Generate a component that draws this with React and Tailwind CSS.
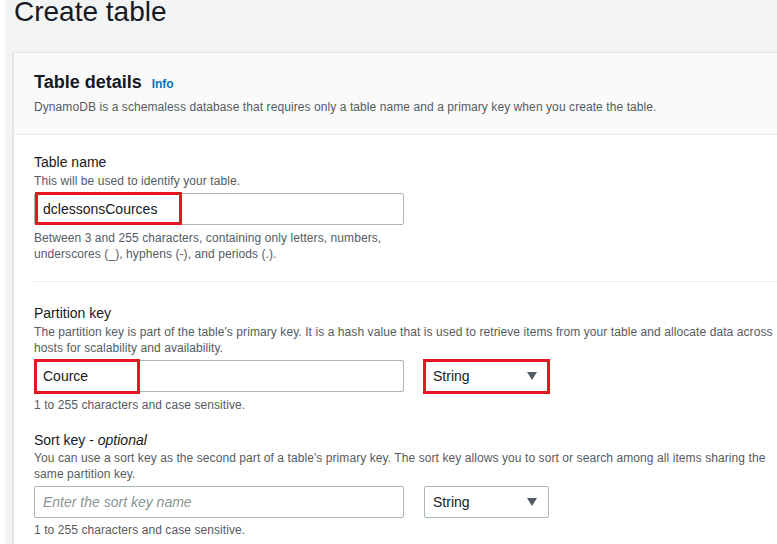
import React from "react";

const font = { fontFamily: '"Liberation Sans", Arial, sans-serif' };

const Caret = () => (
    <svg width="10" height="8" viewBox="0 0 10 8" className="shrink-0">
        <path d="M0 0 L10 0 L5 8 Z" fill="#545b64" />
    </svg>
);

const TypeSelect = ({ marked }) => (
    <div className="relative ml-5 w-[125px] h-8">
        <div className="flex items-center justify-between h-full px-2 border border-[#aab7b8] rounded-[2px] bg-white text-sm text-[#16191f]">
            <span>String</span>
            <span className="mr-[3px]">
                <Caret />
            </span>
        </div>
        {marked && (
            <div className="absolute -left-[1px] -top-[1px] w-[127px] h-[35px] border-[3px] border-[#e5161f]" />
        )}
    </div>
);

const TextBox = ({ value, placeholder, mark }) => (
    <div className="relative w-[370px] h-8">
        <div className="flex items-center h-full px-2 border border-[#aab7b8] rounded-[2px] bg-white text-sm">
            {value ? (
                <span className="text-[#16191f]">{value}</span>
            ) : (
                <span className="italic text-[#879596]">{placeholder}</span>
            )}
        </div>
        {mark && <div className={`absolute border-[3px] border-[#e5161f] ${mark}`} />}
    </div>
);

const Label = ({ children }) => (
    <p className="text-sm leading-5 text-[#16191f]">{children}</p>
);

const Hint = ({ children, className = "" }) => (
    <p className={`text-xs leading-4 tracking-[0.08px] text-[#545b64] whitespace-nowrap ${className}`}>{children}</p>
);

export default function App() {
    return (
        <div style={font} className="flex w-[777px] h-[544px] overflow-hidden bg-white">
            <div className="ml-[5px] flex-1 bg-[#f2f3f3] flex flex-col min-w-0">
                <h1 className="shrink-0 ml-[9px] -mt-[4px] h-[56px] text-[28px] leading-8 text-[#16191f]">
                    Create table
                </h1>
                <div className="shrink-0 ml-[7px] w-[900px] border-l-2 border-t border-[#e4e6e6] flex flex-col">
                    <div className="bg-[#fafafa] pl-5 pt-[17px] pb-[19px] border-b border-[#eaeded]">
                        <div className="flex items-baseline gap-[10px]">
                            <h2 className="text-lg leading-6 font-bold text-[#16191f]">Table details</h2>
                            <span className="text-xs font-bold text-[#0073bb]">Info</span>
                        </div>
                        <Hint className="mt-[5px]">
                            DynamoDB is a schemaless database that requires only a table name and a primary key when you create the table.
                        </Hint>
                    </div>
                    <div className="bg-white pl-5 pt-[17px] pb-10">
                        <Label>Table name</Label>
                        <Hint className="mt-[1px]">This will be used to identify your table.</Hint>
                        <div className="mt-1">
                            <TextBox value="dclessonsCources" mark="left-[1px] -top-[1px] w-[147px] h-[33px]" />
                        </div>
                        <Hint className="mt-[5px]">
                            Between 3 and 255 characters, containing only letters, numbers,
                            <br />
                            underscores (_), hyphens (-), and periods (.).
                        </Hint>
                        <div className="mt-[19px] border-t border-[#eaeded]" />

                        <div className="mt-[21px]">
                            <Label>Partition key</Label>
                        </div>
                        <Hint className="mt-[1px]">
                            The partition key is part of the table's primary key. It is a hash value that is used to retrieve items from your table and allocate data across
                            <br />
                            hosts for scalability and availability.
                        </Hint>
                        <div className="mt-1 flex">
                            <TextBox value="Cource" mark="left-0 -top-[1px] w-[106px] h-[35px]" />
                            <TypeSelect marked />
                        </div>
                        <Hint className="mt-[5px]">1 to 255 characters and case sensitive.</Hint>

                        <div className="mt-[17px]">
                            <Label>
                                Sort key - <i>optional</i>
                            </Label>
                        </div>
                        <Hint>
                            You can use a sort key as the second part of a table's primary key. The sort key allows you to sort or search among all items sharing the
                            <br />
                            same partition key.
                        </Hint>
                        <div className="mt-1 flex">
                            <TextBox placeholder="Enter the sort key name" />
                            <TypeSelect />
                        </div>
                        <Hint className="mt-1">1 to 255 characters and case sensitive.</Hint>
                    </div>
                </div>
            </div>
        </div>
    );
}
